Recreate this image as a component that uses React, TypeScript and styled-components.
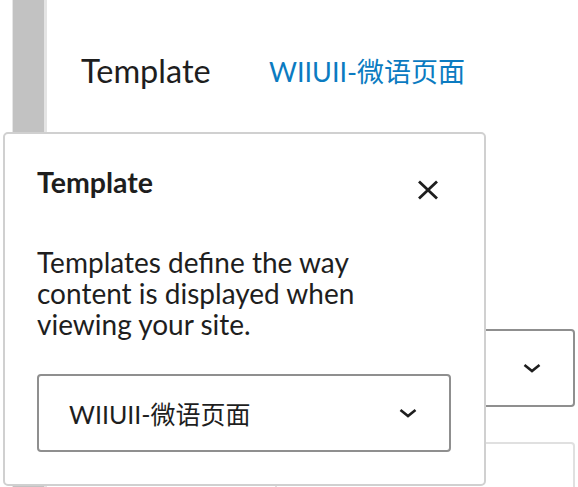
import React from "react";
import styled, { createGlobalStyle } from "styled-components";

const Global = createGlobalStyle`
  html, body { margin: 0; padding: 0; background: #fff; }
  body { font-family: Lato, "Noto Sans CJK SC", sans-serif; color: #1e1e1e; overflow: hidden; }
`;

const Page = styled.div`
  position: relative;
  display: flex;
  width: 578px;
  height: 487px;
  overflow: hidden;
  background: #fff;
`;

const Rail = styled.div`
  margin-left: 12px;
  width: 31px;
  height: 100%;
  background: #c2c2c2;
  border-left: 1px solid #e6e6e6;
  border-right: 3px solid #e4e4e4;
  flex-shrink: 0;
`;

const Main = styled.div`
  flex: 1;
  display: flex;
  flex-direction: column;
  padding-top: 47px;
`;

const InfoRow = styled.div`
  display: flex;
  align-items: center;
  height: 46px;
  padding-left: 34px;
  flex-shrink: 0;
`;

const Label = styled.span`
  width: 188px;
  font-size: 32.5px;
  color: #1e1e1e;
`;

const Link = styled.a`
  color: #0b7bc1;
  text-decoration: none;
  font-size: 27px;
`;

const Control = styled.div<{ $muted?: boolean }>`
  align-self: flex-end;
  flex-shrink: 0;
  margin-right: 3px;
  width: 300px;
  height: ${(p) => (p.$muted ? "90px" : "78px")};
  box-sizing: border-box;
  border: 2px solid ${(p) => (p.$muted ? "#e0e0e0" : "#8f8f8f")};
  border-radius: 4px;
  display: flex;
  align-items: center;
  justify-content: flex-end;
  padding-right: 32px;
`;

const Gap = styled.div<{ $h: number }>`
  height: ${(p) => p.$h}px;
  flex-shrink: 0;
`;

const Popover = styled.div`
  position: absolute;
  left: 3px;
  top: 132px;
  width: 483px;
  height: 354px;
  box-sizing: border-box;
  background: #fff;
  border: 2px solid #d0d0d0;
  border-radius: 5px;
  padding: 0 33px 0 32px;
  display: flex;
  flex-direction: column;
`;

const Header = styled.div`
  display: flex;
  align-items: center;
  justify-content: space-between;
  height: 58px;
  margin-top: 19px;
  flex-shrink: 0;
`;

const Title = styled.h2`
  margin: 0;
  font-size: 28.5px;
  font-weight: 700;
  color: #1e1e1e;
`;

const Close = styled.button`
  border: 0;
  background: none;
  padding: 0;
  width: 40px;
  height: 40px;
  margin: 16px 3px 0 0;
  display: flex;
  align-items: center;
  justify-content: center;
  color: #1e1e1e;
`;

const Description = styled.p`
  margin: 36px 0 0;
  max-width: 360px;
  font-size: 28px;
  line-height: 31px;
  color: #1e1e1e;
  flex-shrink: 0;
`;

const Select = styled.div`
  margin-top: 34px;
  height: 78px;
  flex-shrink: 0;
  box-sizing: border-box;
  border: 2px solid #8f8f8f;
  border-radius: 4px;
  display: flex;
  align-items: center;
  justify-content: space-between;
  padding: 0 32px 0 30px;
  font-size: 25px;
`;

const Chevron = () => (
  <svg width="18" height="10" viewBox="0 0 18 10" fill="none">
    <path d="M1.5 2 L9 8 L16.5 2" stroke="#1e1e1e" strokeWidth="2.6" />
  </svg>
);

const CloseIcon = () => (
  <svg width="22" height="20" viewBox="0 0 22 20" fill="none">
    <path d="M2 1.5 L20 18.5 M20 1.5 L2 18.5" stroke="#1e1e1e" strokeWidth="2.8" />
  </svg>
);

export default function App() {
  return (
    <>
      <Global />
      <Page>
        <Rail />
        <Main>
          <InfoRow>
            <Label>Template</Label>
            <Link href="#">WIIUII-微语页面</Link>
          </InfoRow>
          <Gap $h={236} />
          <Control>
            <Chevron />
          </Control>
          <Gap $h={35} />
          <Control $muted />
        </Main>
        <Popover>
          <Header>
            <Title>Template</Title>
            <Close aria-label="Close">
              <CloseIcon />
            </Close>
          </Header>
          <Description>
            Templates define the way content is displayed when viewing your site.
          </Description>
          <Select>
            <span>WIIUII-微语页面</span>
            <Chevron />
          </Select>
        </Popover>
      </Page>
    </>
  );
}
